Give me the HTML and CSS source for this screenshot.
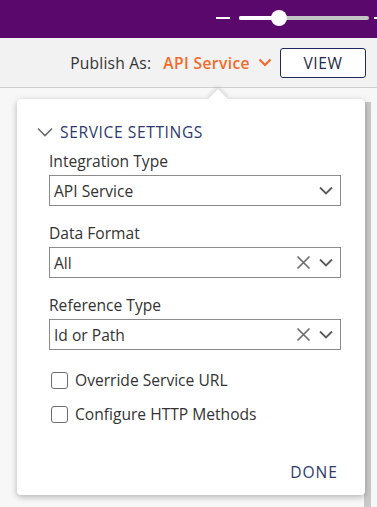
FILE: index.html
```html
<!DOCTYPE html>
<html lang="en">
<head>
  <meta charset="UTF-8">
  <title>Service Settings</title>
  <link rel="stylesheet" href="styles.css">
</head>
<body>
  <div class="topbar">
    <span class="zoom-dash"></span>
    <div class="slider">
      <div class="slider-fill"></div>
      <div class="slider-thumb"></div>
    </div>
    <span class="zoom-dash short"></span>
  </div>

  <div class="toolbar">
    <span class="publish-label">Publish As:</span>
    <span class="publish-value">API Service
      <svg class="publish-caret" width="14" height="9" viewBox="0 0 14 9"><path d="M1.5 1.5 L7 7 L12.5 1.5" fill="none" stroke="#f26a2b" stroke-width="2.2"/></svg>
    </span>
    <button class="view-btn">VIEW</button>
  </div>

  <div class="main">
    <div class="scroll-track"></div>
    <div class="popover">
      <div class="popover-arrow"></div>

      <div class="section-title">
        <svg width="16" height="10" viewBox="0 0 16 10"><path d="M1 1.5 L8 8.5 L15 1.5" fill="none" stroke="#6b6b6b" stroke-width="1.6"/></svg>
        SERVICE SETTINGS
      </div>

      <div class="field">
        <div class="field-label">Integration Type</div>
        <div class="select">
          <span class="select-value">API Service</span>
          <svg class="caret" width="14" height="9" viewBox="0 0 14 9"><path d="M1 1.5 L7 7.5 L13 1.5" fill="none" stroke="#5a5a5a" stroke-width="1.8"/></svg>
        </div>
      </div>

      <div class="field">
        <div class="field-label">Data Format</div>
        <div class="select">
          <span class="select-value">All</span>
          <svg class="clear" width="15" height="15" viewBox="0 0 15 15"><path d="M1.5 1.5 L13.5 13.5 M13.5 1.5 L1.5 13.5" fill="none" stroke="#6b6b6b" stroke-width="1.6"/></svg>
          <svg class="caret" width="14" height="9" viewBox="0 0 14 9"><path d="M1 1.5 L7 7.5 L13 1.5" fill="none" stroke="#5a5a5a" stroke-width="1.8"/></svg>
        </div>
      </div>

      <div class="field">
        <div class="field-label">Reference Type</div>
        <div class="select">
          <span class="select-value">Id or Path</span>
          <svg class="clear" width="15" height="15" viewBox="0 0 15 15"><path d="M1.5 1.5 L13.5 13.5 M13.5 1.5 L1.5 13.5" fill="none" stroke="#6b6b6b" stroke-width="1.6"/></svg>
          <svg class="caret" width="14" height="9" viewBox="0 0 14 9"><path d="M1 1.5 L7 7.5 L13 1.5" fill="none" stroke="#5a5a5a" stroke-width="1.8"/></svg>
        </div>
      </div>

      <div class="checks">
        <label class="check"><span class="box"></span>Override Service URL</label>
        <label class="check"><span class="box"></span>Configure HTTP Methods</label>
      </div>

      <div class="actions">
        <span class="done">DONE</span>
      </div>
    </div>
  </div>
</body>
</html>
```

FILE: styles.css
```css
* {
  margin: 0;
  padding: 0;
  box-sizing: border-box;
}
body {
  font-family: 'Open Sans', 'Lato', sans-serif;
  font-size: 15.6px;
  color: #333;
  background: #f7f7f7;
  width: 377px;
  height: 507px;
  overflow: hidden;
}

/* top purple bar with zoom slider */
.topbar {
  height: 38px;
  background: #5a086b;
  display: flex;
  align-items: center;
  justify-content: flex-end;
  padding-bottom: 2px;
}
.zoom-dash {
  width: 14px;
  height: 2px;
  background: #fff;
  margin-right: 9px;
}
.zoom-dash.short {
  width: 3px;
  margin-right: 0;
  margin-left: 5px;
}
.slider {
  position: relative;
  width: 130px;
  height: 4px;
  border-radius: 2px;
  background: #c4c4c4;
}
.slider-fill {
  width: 40px;
  height: 4px;
  border-radius: 2px;
  background: #fff;
}
.slider-thumb {
  position: absolute;
  left: 32px;
  top: -6px;
  width: 16px;
  height: 16px;
  border-radius: 50%;
  background: #fff;
}

/* publish toolbar */
.toolbar {
  height: 50px;
  background: #f2f2f2;
  border-bottom: 1px solid #cfcfcf;
  display: flex;
  align-items: center;
  justify-content: flex-end;
  padding-right: 11px;
}
.publish-label {
  color: #333;
  margin-right: 12px;
  letter-spacing: 0.2px;
}
.publish-value {
  color: #f26a2b;
  font-weight: 600;
  letter-spacing: 0.4px;
  display: flex;
  align-items: center;
  gap: 8px;
  margin-right: 8px;
}
.view-btn {
  width: 86px;
  height: 30px;
  border: 1px solid #1f2a5c;
  border-radius: 3px;
  background: #fff;
  color: #1f2a4a;
  font-family: inherit;
  font-size: 15.6px;
  letter-spacing: 0.6px;
}

/* main canvas */
.main {
  position: relative;
  height: 419px;
  padding: 11px 0 0 17px;
}
.scroll-track {
  position: absolute;
  right: 6px;
  top: 14px;
  bottom: 0;
  width: 7px;
  background: #c9c9c9;
}
.popover {
  position: relative;
  width: 348px;
  height: 396px;
  background: #fff;
  border-radius: 4px;
  box-shadow: 0 2px 6px rgba(0, 0, 0, 0.28);
  padding: 22px 24px 0 32px;
  display: flex;
  flex-direction: column;
}
.popover-arrow {
  position: absolute;
  left: 194px;
  top: -7px;
  width: 14px;
  height: 14px;
  background: #fff;
  transform: rotate(45deg);
  box-shadow: -2px -2px 4px rgba(0, 0, 0, 0.12);
}
.section-title {
  position: relative;
  margin-left: -12px;
  display: flex;
  align-items: center;
  gap: 7px;
  height: 22px;
  color: #2e3a6e;
  letter-spacing: 0.6px;
}
.field {
  margin-top: 8px;
}
.field + .field {
  margin-top: 17px;
}
.field-label {
  height: 20px;
  line-height: 20px;
  margin-bottom: 4px;
  color: #333;
}
.select {
  height: 31px;
  border: 1px solid #8a8a8a;
  display: flex;
  align-items: center;
  padding: 0 7px 0 4px;
  color: #333;
}
.select-value {
  flex: 1;
}
.clear {
  margin-right: 8px;
}
.checks {
  margin-top: 20px;
  display: flex;
  flex-direction: column;
  gap: 14px;
}
.check {
  display: flex;
  align-items: center;
  height: 20px;
  padding-left: 2px;
  color: #333;
}
.box {
  width: 17px;
  height: 17px;
  border: 1px solid #6d6d6d;
  border-radius: 3px;
  margin-right: 7px;
}
.actions {
  margin-top: auto;
  padding: 0 3px 13px 0;
  display: flex;
  justify-content: flex-end;
}
.done {
  color: #2e3a6e;
  letter-spacing: 1px;
  line-height: 20px;
}
```
